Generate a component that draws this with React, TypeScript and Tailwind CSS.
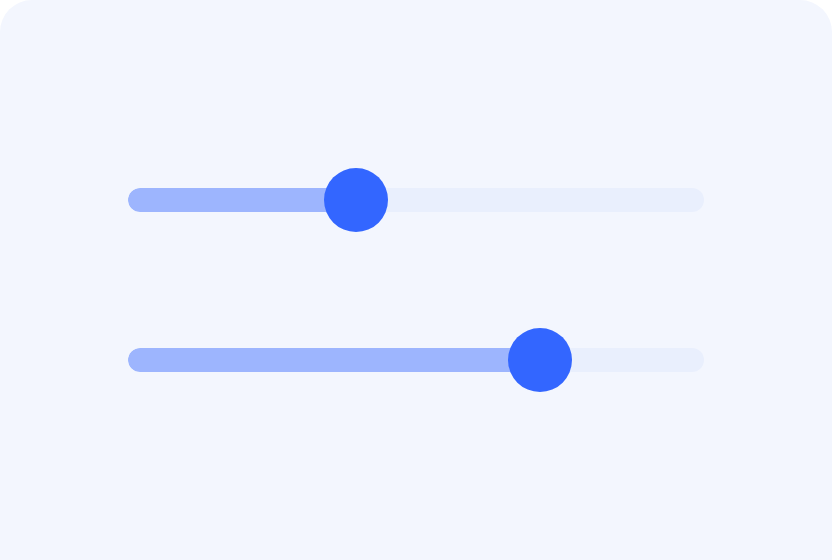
import React from 'react';

const Slider = ({ value }: { value: number }) => {
  // value is the thumb centre in px from the left of the track
  return (
    <div className="relative h-16 w-[576px] flex items-center">
      <div className="h-6 w-full rounded-full bg-[#e9effd] overflow-hidden">
        <div className="h-full rounded-full bg-[#9db5fe]" style={{ width: value }} />
      </div>
      <div
        className="absolute top-0 h-16 w-16 -translate-x-1/2 rounded-full bg-[#3366ff]"
        style={{ left: value }}
      />
    </div>
  );
};

export default function App() {
  return (
    <div className="w-[832px] h-[560px] bg-white">
      <div className="h-full w-full rounded-t-[32px] bg-[#f3f6fe] flex flex-col items-center justify-center gap-24">
        <Slider value={228} />
        <Slider value={412} />
      </div>
    </div>
  );
}
